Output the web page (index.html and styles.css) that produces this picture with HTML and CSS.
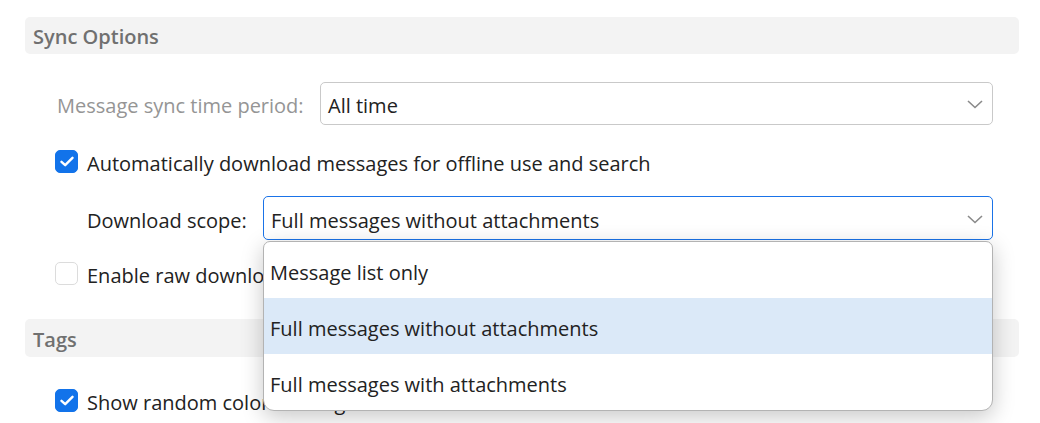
FILE: index.html
```html
<!DOCTYPE html>
<html>
<head>
<meta charset="utf-8">
<link rel="stylesheet" href="styles.css">
</head>
<body>
<div class="page">
  <div class="section-header">Sync Options</div>

  <div class="row row-period">
    <span class="label muted">Message sync time period:</span>
    <div class="select">
      <span class="select-value">All time</span>
      <svg class="chev" width="16" height="9" viewBox="0 0 16 9"><path d="M1 1 L8 7.5 L15 1" fill="none" stroke="#8a8a8a" stroke-width="1.6"/></svg>
    </div>
  </div>

  <div class="row row-check row-auto">
    <span class="checkbox checked"><svg width="14" height="11" viewBox="0 0 14 11"><path d="M1.5 5.8 L5.2 9.2 L12.5 1.8" fill="none" stroke="#fff" stroke-width="2.4" stroke-linecap="round" stroke-linejoin="round"/></svg></span>
    <span class="text">Automatically download messages for offline use and search</span>
  </div>

  <div class="row row-scope">
    <span class="label">Download scope:</span>
    <div class="scope-wrap">
      <div class="select focused">
        <span class="select-value">Full messages without attachments</span>
        <svg class="chev" width="16" height="9" viewBox="0 0 16 9"><path d="M1 1 L8 7.5 L15 1" fill="none" stroke="#8a8a8a" stroke-width="1.6"/></svg>
      </div>
      <ul class="menu">
        <li class="menu-item">Message list only</li>
        <li class="menu-item active">Full messages without attachments</li>
        <li class="menu-item">Full messages with attachments</li>
      </ul>
    </div>
  </div>

  <div class="row row-check row-raw">
    <span class="checkbox"></span>
    <span class="text">Enable raw downloads of messages</span>
  </div>

  <div class="section-header tags">Tags</div>

  <div class="row row-check row-tags">
    <span class="checkbox checked"><svg width="14" height="11" viewBox="0 0 14 11"><path d="M1.5 5.8 L5.2 9.2 L12.5 1.8" fill="none" stroke="#fff" stroke-width="2.4" stroke-linecap="round" stroke-linejoin="round"/></svg></span>
    <span class="text">Show random colors for tags</span>
  </div>
</div>
</body>
</html>
```

FILE: styles.css
```css
* { box-sizing: border-box; }
html, body { margin: 0; padding: 0; background: #fff; }
body {
  font-family: "Open Sans", "Noto Sans", sans-serif;
  font-size: 20px;
  color: #222;
  overflow: hidden;
  height: 423px;
}
.page {
  width: 1040px;
  padding: 17px 21px 0 25px;
  display: flex;
  flex-direction: column;
}
.section-header {
  height: 37px;
  background: #f3f3f3;
  border-radius: 5px;
  padding: 2px 0 0 8px;
  display: flex;
  align-items: center;
  font-weight: 600;
  color: #707070;
  font-size: 20px;
}
.row {
  display: flex;
  align-items: center;
  padding-right: 26px;
}
.label, .text, .select-value {
  white-space: nowrap;
  padding-top: 2px;
  margin-bottom: -2px;
}
.muted { color: #959595; }
.row-period { margin-top: 28px; padding-left: 32px; }
.row-period .label { width: 263px; }
.select {
  flex: 1;
  height: 43px;
  border: 1px solid #c9c9c9;
  border-radius: 5px;
  display: flex;
  align-items: center;
  justify-content: space-between;
  padding: 0 9px 0 7px;
  background: #fff;
}
.select.focused { border-color: #1a73e8; }
.chev { margin-top: 2px; }
.row-check { padding-left: 30px; }
.checkbox {
  width: 23px;
  height: 23px;
  border-radius: 5px;
  border: 1.5px solid #dcdcdc;
  background: #fff;
  display: flex;
  align-items: center;
  justify-content: center;
  margin-right: 9px;
  flex-shrink: 0;
}
.checkbox.checked { background: #1273ea; border-color: #1273ea; }
.row-auto { margin-top: 23px; }
.row-scope { margin-top: 21px; padding-left: 62px; }
.row-scope .label { width: 176px; }
.scope-wrap { flex: 1; position: relative; }
.scope-wrap .select { height: 44px; }
.menu {
  position: absolute;
  top: 45px;
  left: 0;
  right: 0;
  margin: 0;
  padding: 0;
  list-style: none;
  background: #fff;
  border: 1.5px solid #b3b3b3;
  border-radius: 7px 7px 11px 11px;
  box-shadow: 0 6px 22px rgba(0,0,0,0.22);
  overflow: hidden;
  z-index: 10;
}
.menu-item {
  height: 56px;
  display: flex;
  align-items: center;
  padding: 4px 0 0 6px;
}
.menu-item.active { background: #dbe9f8; }
.row-raw { margin-top: 20px; }
.tags { margin-top: 32px; height: 38px; }
.row-tags { margin-top: 30px; }
```
